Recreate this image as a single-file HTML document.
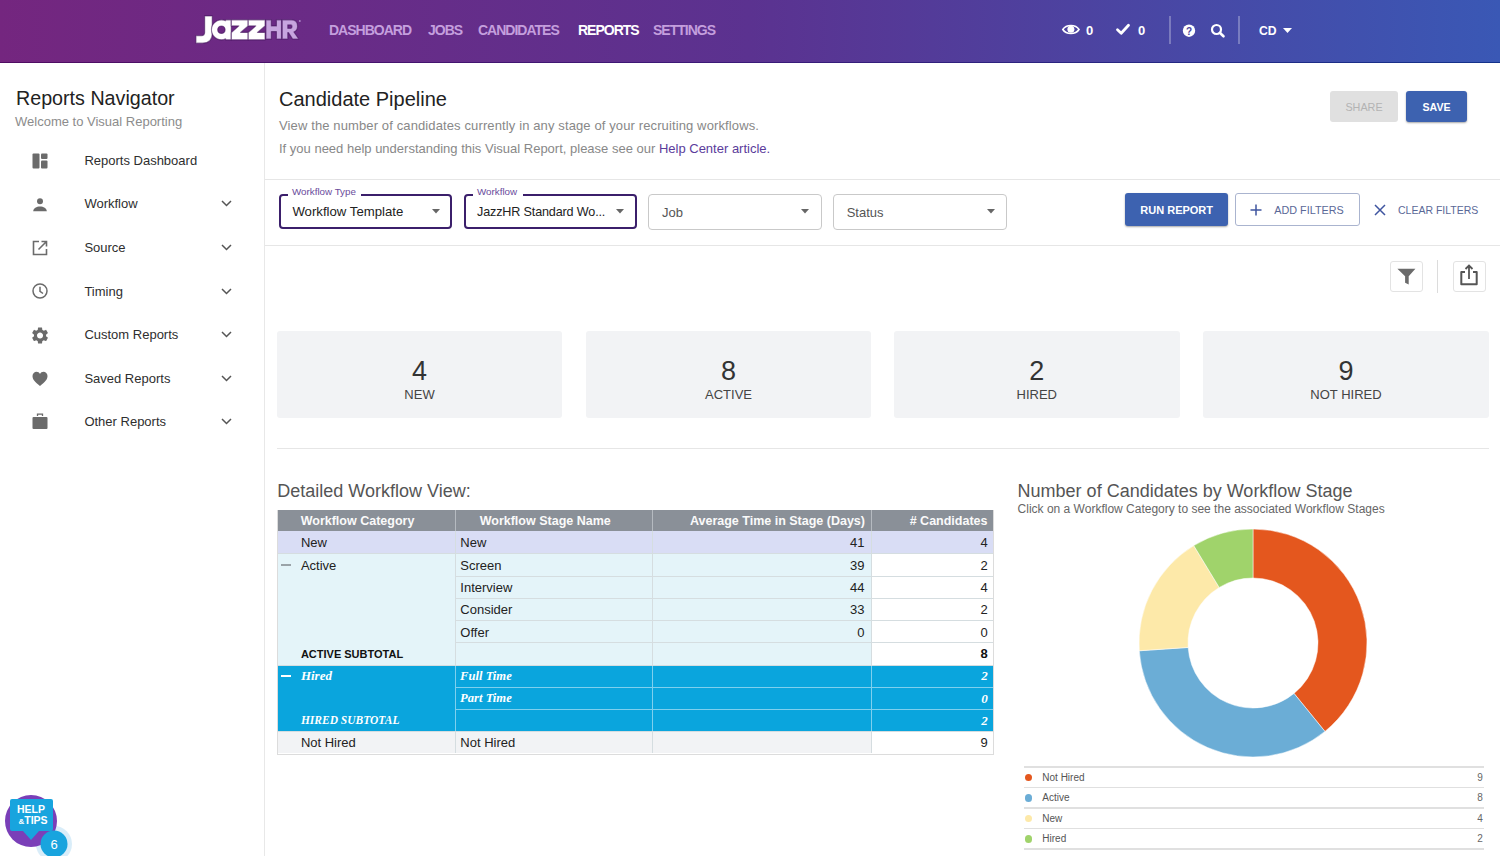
<!DOCTYPE html><html><head><meta charset="utf-8"><style>
*{margin:0;padding:0;box-sizing:border-box}
html,body{width:1500px;height:856px;overflow:hidden;background:#fff;font-family:"Liberation Sans",sans-serif}
.a{position:absolute;white-space:nowrap;line-height:1}
svg{position:absolute;overflow:visible}
</style></head><body>
<div style="position:absolute;left:0px;top:0px;width:1500px;height:62px;background:linear-gradient(90deg,#74267f 0%,#5b3290 50%,#3a58b5 100%)"></div>
<div style="position:absolute;left:0px;top:62px;width:1500px;height:1px;background:linear-gradient(90deg,#500c62 0%,#3a1a78 50%,#13328b 100%)"></div>
<svg style="left:0;top:0" width="320" height="60" viewBox="0 0 320 60"><g stroke="#3c0f55" stroke-width="1.2" stroke-opacity="0.55" stroke-linejoin="round"><path d="M204.6 15.9 H212.3 V33.5 Q212.3 43.2 202.5 43.2 H195.9 V35.6 H201.5 Q204.6 35.6 204.6 32.5 Z" fill="#fff"/><path fill-rule="evenodd" d="M221.6 19.8 A10 10 0 1 0 225.6 38.9 V39.8 H231.3 V19.8 H225.6 V20.6 A10 10 0 0 0 221.6 19.8 Z M221.4 26 A3.7 3.7 0 1 1 221.4 33.4 A3.7 3.7 0 1 1 221.4 26 Z" fill="#fff"/><path d="M231.3 19.8 H248.20000000000002 V25.9 L240.60000000000002 32.4 H248.20000000000002 V39.8 H231.3 V32.6 L238.8 25.9 H231.3 Z" fill="#fff"/><path d="M248.2 19.8 H265.09999999999997 V25.9 L257.49999999999994 32.4 H265.09999999999997 V39.8 H248.2 V32.6 L255.7 25.9 H248.2 Z" fill="#fff"/><path d="M265.9 19.8 H271.4 V25.9 H276.4 V19.8 H281.5 V39 H276.4 V31.6 H271.4 V39 H265.9 Z" fill="#c7a5df"/><path fill-rule="evenodd" d="M282.2 19.8 H291.5 Q297.6 19.8 297.6 26.2 Q297.6 30.4 293.9 32 L298.8 39 H292.6 L288.4 32.6 H287.8 V39 H282.2 Z M287.8 24.9 H290.8 Q292 24.9 292 26.6 Q292 28.3 290.8 28.3 H287.8 Z" fill="#c7a5df"/></g><circle cx="299.8" cy="21" r="1" fill="#c7a5df" opacity=".7"/></svg>
<div class="a" style="left:329px;top:23.15px;font-size:14px;color:#c49fdd;font-weight:bold;letter-spacing:-1px;">DASHBOARD</div>
<div class="a" style="left:428px;top:23.15px;font-size:14px;color:#c49fdd;font-weight:bold;letter-spacing:-1px;">JOBS</div>
<div class="a" style="left:478px;top:23.15px;font-size:14px;color:#c49fdd;font-weight:bold;letter-spacing:-1px;">CANDIDATES</div>
<div class="a" style="left:578px;top:23.15px;font-size:14px;color:#fff;font-weight:bold;letter-spacing:-1px;">REPORTS</div>
<div class="a" style="left:653px;top:23.15px;font-size:14px;color:#c49fdd;font-weight:bold;letter-spacing:-1px;">SETTINGS</div>
<svg style="left:1061px;top:22px" width="20" height="15" viewBox="0 0 20 15">
<path d="M1.8 7.5 C5.2 2.2 14.6 2.2 18 7.5 C14.6 12.8 5.2 12.8 1.8 7.5 Z" fill="none" stroke="#fff" stroke-width="1.6"/>
<circle cx="9.9" cy="7.3" r="3.5" fill="#fff"/></svg>
<div class="a" style="left:1086px;top:24.3px;font-size:13px;color:#fff;font-weight:bold;">0</div>
<svg style="left:1114px;top:22px" width="18" height="16" viewBox="0 0 18 16">
<path d="M3.5 7.8 L7.2 11.2 L14.5 3.3" fill="none" stroke="#fff" stroke-width="2.8" stroke-linecap="round" stroke-linejoin="round"/></svg>
<div class="a" style="left:1138px;top:24.3px;font-size:13px;color:#fff;font-weight:bold;">0</div>
<div style="position:absolute;left:1169px;top:16px;width:1.5px;height:28px;background:rgba(255,255,255,.28)"></div>
<svg style="left:1182px;top:24px" width="15" height="14" viewBox="0 0 15 14">
<circle cx="7" cy="6.7" r="6.2" fill="#fff"/>
<text x="7" y="10.5" text-anchor="middle" font-family="Liberation Sans" font-weight="bold" font-size="10" fill="#4b3f9d">?</text></svg>
<svg style="left:1210px;top:23px" width="16" height="15" viewBox="0 0 16 15">
<circle cx="6.5" cy="6.5" r="4.5" fill="none" stroke="#fff" stroke-width="2.2"/>
<path d="M9.8 9.8 L13.5 13.3" stroke="#fff" stroke-width="2.6" stroke-linecap="round"/></svg>
<div style="position:absolute;left:1238px;top:16px;width:1.5px;height:28px;background:rgba(255,255,255,.28)"></div>
<div class="a" style="left:1259px;top:24.67px;font-size:12.2px;color:#fff;font-weight:bold;">CD</div>
<svg style="left:1283px;top:28px" width="9" height="5" viewBox="0 0 9 5"><path d="M0 0 H9 L4.5 5 Z" fill="#fff"/></svg>
<div style="position:absolute;left:264px;top:63px;width:1px;height:793px;background:#e8e8e8"></div>
<div class="a" style="left:16px;top:89.32px;font-size:19.7px;color:#222;font-weight:normal;">Reports Navigator</div>
<div class="a" style="left:15px;top:114.9px;font-size:13px;color:#8c8c8c;font-weight:normal;">Welcome to Visual Reporting</div>
<div class="a" style="left:84.4px;top:153.8px;font-size:13px;color:#2e2e2e;font-weight:normal;">Reports Dashboard</div>
<svg style="left:32px;top:153px" width="16" height="16" viewBox="0 0 16 16"><rect x="0.5" y="0.5" width="7" height="15" rx="1" fill="#6b6b6b"/><rect x="9" y="0.5" width="6.5" height="5.5" rx="1" fill="#6b6b6b"/><rect x="9" y="7.5" width="6.5" height="8" rx="1" fill="#6b6b6b"/></svg>
<div class="a" style="left:84.4px;top:197.38px;font-size:13px;color:#2e2e2e;font-weight:normal;">Workflow</div>
<svg style="left:32px;top:197.5px" width="16" height="16" viewBox="0 0 16 16"><circle cx="8" cy="3.2" r="3" fill="#6b6b6b"/><path d="M1.2 13.2 C1.2 6.8 14.8 6.8 14.8 13.2 Z" fill="#6b6b6b"/></svg>
<svg style="left:221px;top:200.4px" width="11" height="7" viewBox="0 0 11 7"><path d="M1 1 L5.5 5.5 L10 1" fill="none" stroke="#555" stroke-width="1.5"/></svg>
<div class="a" style="left:84.4px;top:240.96px;font-size:13px;color:#2e2e2e;font-weight:normal;">Source</div>
<svg style="left:32px;top:239.7px" width="16" height="16" viewBox="0 0 16 16"><path d="M7 1.5 H1.5 V14.5 H14.5 V9" fill="none" stroke="#6b6b6b" stroke-width="1.6"/><path d="M9.5 1.5 H14.5 V6.5 M14.5 1.5 L6.5 9.5" fill="none" stroke="#6b6b6b" stroke-width="1.6"/></svg>
<svg style="left:221px;top:244.0px" width="11" height="7" viewBox="0 0 11 7"><path d="M1 1 L5.5 5.5 L10 1" fill="none" stroke="#555" stroke-width="1.5"/></svg>
<div class="a" style="left:84.4px;top:284.54px;font-size:13px;color:#2e2e2e;font-weight:normal;">Timing</div>
<svg style="left:32px;top:283.3px" width="16" height="16" viewBox="0 0 16 16"><circle cx="8" cy="8" r="7" fill="none" stroke="#6b6b6b" stroke-width="1.5"/><path d="M8 3.8 V8.3 L11 10.5" fill="none" stroke="#6b6b6b" stroke-width="1.5"/></svg>
<svg style="left:221px;top:287.5px" width="11" height="7" viewBox="0 0 11 7"><path d="M1 1 L5.5 5.5 L10 1" fill="none" stroke="#555" stroke-width="1.5"/></svg>
<div class="a" style="left:84.4px;top:328.12px;font-size:13px;color:#2e2e2e;font-weight:normal;">Custom Reports</div>
<svg style="left:32px;top:326.7px" width="16" height="16" viewBox="0 0 16 16"><path transform="translate(-2.05 -1.6) scale(0.84)" d="M19.14,12.94c0.04-0.3,0.06-0.61,0.06-0.94c0-0.32-0.02-0.64-0.07-0.94l2.03-1.58c0.18-0.14,0.23-0.41,0.12-0.61l-1.92-3.32c-0.12-0.22-0.37-0.29-0.59-0.22l-2.39,0.96c-0.5-0.38-1.03-0.7-1.62-0.94L14.4,2.81c-0.04-0.24-0.24-0.41-0.48-0.41h-3.84c-0.24,0-0.43,0.17-0.47,0.41L9.25,5.35C8.66,5.59,8.12,5.92,7.63,6.29L5.24,5.33c-0.22-0.08-0.47,0-0.59,0.22L2.74,8.87C2.62,9.08,2.66,9.34,2.86,9.48l2.03,1.58C4.84,11.36,4.8,11.69,4.8,12s0.02,0.64,0.07,0.94l-2.03,1.58c-0.18,0.14-0.23,0.41-0.12,0.61l1.92,3.32c0.12,0.22,0.37,0.29,0.59,0.22l2.39-0.96c0.5,0.38,1.03,0.7,1.62,0.94l0.36,2.54c0.05,0.24,0.24,0.41,0.48,0.41h3.84c0.24,0,0.44-0.17,0.47-0.41l0.36-2.54c0.59-0.24,1.13-0.56,1.62-0.94l2.39,0.96c0.22,0.08,0.47,0,0.59-0.22l1.92-3.32c0.12-0.22,0.07-0.47-0.12-0.61L19.14,12.94z M12,15.6c-1.98,0-3.6-1.62-3.6-3.6s1.62-3.6,3.6-3.6s3.6,1.62,3.6,3.6S13.98,15.6,12,15.6z" fill="#6b6b6b"/></svg>
<svg style="left:221px;top:331.1px" width="11" height="7" viewBox="0 0 11 7"><path d="M1 1 L5.5 5.5 L10 1" fill="none" stroke="#555" stroke-width="1.5"/></svg>
<div class="a" style="left:84.4px;top:371.7px;font-size:13px;color:#2e2e2e;font-weight:normal;">Saved Reports</div>
<svg style="left:32px;top:370.5px" width="16" height="16" viewBox="0 0 16 16"><path d="M8 15 C3 11 0.5 8.5 0.5 5 C0.5 2.5 2.5 0.8 4.5 0.8 C6 0.8 7.3 1.7 8 3 C8.7 1.7 10 0.8 11.5 0.8 C13.5 0.8 15.5 2.5 15.5 5 C15.5 8.5 13 11 8 15 Z" fill="#6b6b6b"/></svg>
<svg style="left:221px;top:374.7px" width="11" height="7" viewBox="0 0 11 7"><path d="M1 1 L5.5 5.5 L10 1" fill="none" stroke="#555" stroke-width="1.5"/></svg>
<div class="a" style="left:84.4px;top:415.28px;font-size:13px;color:#2e2e2e;font-weight:normal;">Other Reports</div>
<svg style="left:32px;top:413.1px" width="16" height="16" viewBox="0 0 16 16"><path d="M5.5 3 V1.2 H10.5 V3" fill="none" stroke="#6b6b6b" stroke-width="1.3"/><rect x="0.5" y="4" width="15" height="12" rx="1" fill="#6b6b6b"/></svg>
<svg style="left:221px;top:418.3px" width="11" height="7" viewBox="0 0 11 7"><path d="M1 1 L5.5 5.5 L10 1" fill="none" stroke="#555" stroke-width="1.5"/></svg>
<svg style="left:0px;top:780px" width="80" height="76" viewBox="0 0 80 76">
<circle cx="54" cy="64" r="18" fill="#cfe9f7" opacity=".8"/>
<circle cx="31" cy="41" r="26" fill="#7a3fb8"/>
<path d="M12 19 H51 Q53 19 53 21 V49 Q53 51 51 51 H39 L31 60 L23 51 H12 Q10 51 10 49 V21 Q10 19 12 19 Z" fill="#18a4de"/>
<text x="31" y="33" text-anchor="middle" font-family="Liberation Sans" font-weight="bold" font-size="10.5" fill="#fff">HELP</text>
<text x="33" y="44" text-anchor="middle" font-family="Liberation Sans" font-weight="bold" font-size="10.5" fill="#fff"><tspan font-size="8">&amp;</tspan>TIPS</text>
<circle cx="54" cy="64" r="13.5" fill="#18a4de"/>
<text x="54" y="69" text-anchor="middle" font-family="Liberation Sans" font-size="13" fill="#fff">6</text>
</svg>
<div class="a" style="left:279px;top:88.77px;font-size:20px;color:#222;font-weight:normal;">Candidate Pipeline</div>
<div class="a" style="left:279px;top:119.1px;font-size:13px;color:#888;font-weight:normal;letter-spacing:.12px;">View the number of candidates currently in any stage of your recruiting workflows.</div>
<div class="a" style="left:279px;top:141.8px;font-size:13px;color:#888;font-weight:normal;">If you need help understanding this Visual Report, please see our <span style="color:#5b3c9b">Help Center article.</span></div>
<div style="position:absolute;left:1330px;top:91px;width:68px;height:31px;background:#e0e0e0;border-radius:3px"></div>
<div class="a" style="left:1164px;width:400px;text-align:center;top:101.76px;font-size:10.8px;color:#b3b3b3;font-weight:normal;">SHARE</div>
<div style="position:absolute;left:1406px;top:91px;width:61px;height:31px;background:#3d62b0;border-radius:3px;box-shadow:0 1px 2px rgba(0,0,0,.35)"></div>
<div class="a" style="left:1236.5px;width:400px;text-align:center;top:101.93px;font-size:10.6px;color:#fff;font-weight:bold;">SAVE</div>
<div style="position:absolute;left:265px;top:179px;width:1235px;height:1px;background:#e6e6e6"></div>
<div style="position:absolute;left:265px;top:245px;width:1235px;height:1px;background:#e6e6e6"></div>
<div style="position:absolute;left:279px;top:193.5px;width:173px;height:35.5px;border:2px solid #3b1f6b;border-radius:4px"></div>
<div style="position:absolute;left:288px;top:190px;width:73px;height:7px;background:#fff"></div>
<div class="a" style="left:292px;top:186.7px;font-size:9.8px;color:#6a4c9c;font-weight:normal;">Workflow Type</div>
<div class="a" style="left:292.4px;top:205.33px;font-size:13.2px;color:#222;font-weight:normal;">Workflow Template</div>
<svg style="left:431.5px;top:209px" width="8" height="5" viewBox="0 0 8 5"><path d="M0 0 H8 L4 4.5 Z" fill="#666"/></svg>
<div style="position:absolute;left:463.5px;top:193.5px;width:173.0px;height:35.5px;border:2px solid #3b1f6b;border-radius:4px"></div>
<div style="position:absolute;left:473px;top:190px;width:50px;height:7px;background:#fff"></div>
<div class="a" style="left:477px;top:186.7px;font-size:9.8px;color:#6a4c9c;font-weight:normal;">Workflow</div>
<div class="a" style="left:477px;top:205.33px;font-size:13.2px;color:#222;font-weight:normal;"><span style="font-size:12.6px;letter-spacing:-.15px">JazzHR Standard Wo...</span></div>
<svg style="left:616px;top:209px" width="8" height="5" viewBox="0 0 8 5"><path d="M0 0 H8 L4 4.5 Z" fill="#666"/></svg>
<div style="position:absolute;left:647.5px;top:193.5px;width:174.0px;height:36.0px;border:1px solid #c9c9c9;border-radius:4px"></div>
<div class="a" style="left:662px;top:205.5px;font-size:13px;color:#555;font-weight:normal;">Job</div>
<svg style="left:800.5px;top:209px" width="8" height="5" viewBox="0 0 8 5"><path d="M0 0 H8 L4 4.5 Z" fill="#666"/></svg>
<div style="position:absolute;left:833px;top:193.5px;width:173.5px;height:36.0px;border:1px solid #c9c9c9;border-radius:4px"></div>
<div class="a" style="left:846.7px;top:205.5px;font-size:13px;color:#555;font-weight:normal;">Status</div>
<svg style="left:986.5px;top:209px" width="8" height="5" viewBox="0 0 8 5"><path d="M0 0 H8 L4 4.5 Z" fill="#666"/></svg>
<div style="position:absolute;left:1125px;top:193px;width:103px;height:33px;background:#3d62b0;border-radius:3px;box-shadow:0 1px 2px rgba(0,0,0,.35)"></div>
<div class="a" style="left:1140.3px;top:204.89px;font-size:11px;color:#fff;font-weight:bold;">RUN REPORT</div>
<div style="position:absolute;left:1235px;top:193px;width:124.5px;height:33px;border:1px solid #aab4cf;border-radius:3px"></div>
<svg style="left:1250px;top:204px" width="12" height="12" viewBox="0 0 12 12"><path d="M6 0.5 V11.5 M0.5 6 H11.5" stroke="#3f55a0" stroke-width="1.5"/></svg>
<div class="a" style="left:1274.3px;top:204.56px;font-size:10.8px;color:#5a6897;font-weight:normal;">ADD FILTERS</div>
<svg style="left:1374px;top:203.5px" width="12" height="12" viewBox="0 0 12 12"><path d="M1 1 L11 11 M11 1 L1 11" stroke="#3f55a0" stroke-width="1.5"/></svg>
<div class="a" style="left:1398px;top:204.81px;font-size:10.5px;color:#5a6897;font-weight:normal;">CLEAR FILTERS</div>
<div style="position:absolute;left:1390px;top:261px;width:33px;height:31px;border:1px solid #e3e3e3;border-radius:3px"></div>
<svg style="left:1397px;top:268px" width="19" height="17" viewBox="0 0 19 17"><path d="M0.4 0.8 H18.4 L11.7 8.2 V16.5 L8.1 14.8 V8.2 Z" fill="#6b6b6b"/></svg>
<div style="position:absolute;left:1437px;top:260px;width:1px;height:33px;background:#dcdcdc"></div>
<div style="position:absolute;left:1453px;top:261px;width:33px;height:31px;border:1px solid #e3e3e3;border-radius:3px"></div>
<svg style="left:1459px;top:264px" width="20" height="22" viewBox="0 0 20 22"><path d="M6 8 H2.3 V20.3 H17.7 V8 H14" fill="none" stroke="#555" stroke-width="2" stroke-linejoin="round"/><path d="M10 15 V2 M6.5 5 L10 1.5 L13.5 5" fill="none" stroke="#555" stroke-width="1.8"/></svg>
<div style="position:absolute;left:277px;top:331px;width:285px;height:87px;background:#f2f3f5;border-radius:3px"></div>
<div class="a" style="left:219.5px;width:400px;text-align:center;top:357.64px;font-size:27px;color:#333;font-weight:normal;">4</div>
<div class="a" style="left:219.5px;width:400px;text-align:center;top:387.8px;font-size:13px;color:#444;font-weight:normal;">NEW</div>
<div style="position:absolute;left:586px;top:331px;width:285px;height:87px;background:#f2f3f5;border-radius:3px"></div>
<div class="a" style="left:528.5px;width:400px;text-align:center;top:357.64px;font-size:27px;color:#333;font-weight:normal;">8</div>
<div class="a" style="left:528.5px;width:400px;text-align:center;top:387.8px;font-size:13px;color:#444;font-weight:normal;">ACTIVE</div>
<div style="position:absolute;left:894px;top:331px;width:285.5px;height:87px;background:#f2f3f5;border-radius:3px"></div>
<div class="a" style="left:836.75px;width:400px;text-align:center;top:357.64px;font-size:27px;color:#333;font-weight:normal;">2</div>
<div class="a" style="left:836.75px;width:400px;text-align:center;top:387.8px;font-size:13px;color:#444;font-weight:normal;">HIRED</div>
<div style="position:absolute;left:1203px;top:331px;width:286px;height:87px;background:#f2f3f5;border-radius:3px"></div>
<div class="a" style="left:1146.0px;width:400px;text-align:center;top:357.64px;font-size:27px;color:#333;font-weight:normal;">9</div>
<div class="a" style="left:1146.0px;width:400px;text-align:center;top:387.8px;font-size:13px;color:#444;font-weight:normal;">NOT HIRED</div>
<div style="position:absolute;left:277px;top:448px;width:1212px;height:1px;background:#e6e6e6"></div>
<div class="a" style="left:277.3px;top:481.86px;font-size:18px;color:#555;font-weight:normal;">Detailed Workflow View:</div>
<div class="a" style="left:1017.6px;top:481.66px;font-size:18px;color:#555;font-weight:normal;">Number of Candidates by Workflow Stage</div>
<div class="a" style="left:1017.6px;top:503.14px;font-size:12px;color:#666;font-weight:normal;">Click on a Workflow Category to see the associated Workflow Stages</div>
<div style="position:absolute;left:277px;top:510px;width:716px;height:21px;background:#8a9098"></div>
<div style="position:absolute;left:454.5px;top:510px;width:1.0px;height:21px;background:#b5bac0"></div>
<div style="position:absolute;left:652.0px;top:510px;width:1.0px;height:21px;background:#b5bac0"></div>
<div style="position:absolute;left:871.0px;top:510px;width:1.0px;height:21px;background:#b5bac0"></div>
<div class="a" style="left:300.7px;top:514.62px;font-size:12.5px;color:#fafafa;font-weight:bold;">Workflow Category</div>
<div class="a" style="left:479.7px;top:514.62px;font-size:12.5px;color:#fafafa;font-weight:bold;">Workflow Stage Name</div>
<div class="a" style="right:635px;top:514.62px;font-size:12.5px;color:#fafafa;font-weight:bold;">Average Time in Stage (Days)</div>
<div class="a" style="right:512.5px;top:514.62px;font-size:12.5px;color:#fafafa;font-weight:bold;"># Candidates</div>
<div style="position:absolute;left:277px;top:531px;width:716px;height:22.5px;background:#d9ddf5"></div>
<div style="position:absolute;left:277px;top:553.5px;width:594.5px;height:22.5px;background:#e4f4f9"></div>
<div style="position:absolute;left:871.5px;top:553.5px;width:121.5px;height:22.5px;background:#fff"></div>
<div style="position:absolute;left:277px;top:576px;width:594.5px;height:22.200000000000045px;background:#e4f4f9"></div>
<div style="position:absolute;left:871.5px;top:576px;width:121.5px;height:22.200000000000045px;background:#fff"></div>
<div style="position:absolute;left:277px;top:598.2px;width:594.5px;height:22.199999999999932px;background:#e4f4f9"></div>
<div style="position:absolute;left:871.5px;top:598.2px;width:121.5px;height:22.199999999999932px;background:#fff"></div>
<div style="position:absolute;left:277px;top:620.4px;width:594.5px;height:21.899999999999977px;background:#e4f4f9"></div>
<div style="position:absolute;left:871.5px;top:620.4px;width:121.5px;height:21.899999999999977px;background:#fff"></div>
<div style="position:absolute;left:277px;top:642.3px;width:594.5px;height:22.90000000000009px;background:#e4f4f9"></div>
<div style="position:absolute;left:871.5px;top:642.3px;width:121.5px;height:22.90000000000009px;background:#fff"></div>
<div style="position:absolute;left:277px;top:665.2px;width:716px;height:21.799999999999955px;background:#0aa5dd"></div>
<div style="position:absolute;left:277px;top:687px;width:716px;height:22px;background:#0aa5dd"></div>
<div style="position:absolute;left:277px;top:709px;width:716px;height:22.200000000000045px;background:#0aa5dd"></div>
<div style="position:absolute;left:277px;top:731.2px;width:594.5px;height:22.299999999999955px;background:#f2f3f5"></div>
<div style="position:absolute;left:871.5px;top:731.2px;width:121.5px;height:22.299999999999955px;background:#fff"></div>
<div style="position:absolute;left:454.5px;top:531px;width:1.0px;height:134.20000000000005px;background:#d5dde0"></div>
<div style="position:absolute;left:454.5px;top:665.2px;width:1.0px;height:66.0px;background:#7fd0ee"></div>
<div style="position:absolute;left:454.5px;top:731.2px;width:1.0px;height:22.299999999999955px;background:#d5dde0"></div>
<div style="position:absolute;left:652.0px;top:531px;width:1.0px;height:134.20000000000005px;background:#d5dde0"></div>
<div style="position:absolute;left:652.0px;top:665.2px;width:1.0px;height:66.0px;background:#7fd0ee"></div>
<div style="position:absolute;left:652.0px;top:731.2px;width:1.0px;height:22.299999999999955px;background:#d5dde0"></div>
<div style="position:absolute;left:871.0px;top:531px;width:1.0px;height:134.20000000000005px;background:#d5dde0"></div>
<div style="position:absolute;left:871.0px;top:665.2px;width:1.0px;height:66.0px;background:#7fd0ee"></div>
<div style="position:absolute;left:871.0px;top:731.2px;width:1.0px;height:22.299999999999955px;background:#d5dde0"></div>
<div style="position:absolute;left:277px;top:553.0px;width:716px;height:1.0px;background:#d5dde0"></div>
<div style="position:absolute;left:455px;top:575.5px;width:538px;height:1.0px;background:#d5dde0"></div>
<div style="position:absolute;left:455px;top:597.7px;width:538px;height:1.0px;background:#d5dde0"></div>
<div style="position:absolute;left:455px;top:619.9px;width:538px;height:1.0px;background:#d5dde0"></div>
<div style="position:absolute;left:455px;top:641.8px;width:538px;height:1.0px;background:#d5dde0"></div>
<div style="position:absolute;left:277px;top:664.7px;width:716px;height:1.0px;background:#d5dde0"></div>
<div style="position:absolute;left:455px;top:686.5px;width:538px;height:1.0px;background:#7fd0ee"></div>
<div style="position:absolute;left:455px;top:708.5px;width:538px;height:1.0px;background:#7fd0ee"></div>
<div style="position:absolute;left:277px;top:730.7px;width:716px;height:1.0px;background:#d5dde0"></div>
<div style="position:absolute;left:276.5px;top:510px;width:1.0px;height:244px;background:#dcdcdc"></div>
<div style="position:absolute;left:992.5px;top:510px;width:1.0px;height:244px;background:#dcdcdc"></div>
<div style="position:absolute;left:276.5px;top:753.5px;width:717.0px;height:1.0px;background:#dcdcdc"></div>
<div class="a" style="left:300.9px;top:536.1px;font-size:13px;color:#222;font-weight:normal;">New</div>
<div class="a" style="left:460.3px;top:536.1px;font-size:13px;color:#222;font-weight:normal;">New</div>
<div class="a" style="right:635.5px;top:536.1px;font-size:13px;color:#222;font-weight:normal;">41</div>
<div class="a" style="right:512.2px;top:536.1px;font-size:13px;color:#222;font-weight:normal;">4</div>
<div class="a" style="left:300.9px;top:558.6px;font-size:13px;color:#222;font-weight:normal;">Active</div>
<div class="a" style="left:460.3px;top:558.6px;font-size:13px;color:#222;font-weight:normal;">Screen</div>
<div class="a" style="right:635.5px;top:558.6px;font-size:13px;color:#222;font-weight:normal;">39</div>
<div class="a" style="right:512.2px;top:558.6px;font-size:13px;color:#222;font-weight:normal;">2</div>
<div class="a" style="left:460.3px;top:581.1px;font-size:13px;color:#222;font-weight:normal;">Interview</div>
<div class="a" style="right:635.5px;top:581.1px;font-size:13px;color:#222;font-weight:normal;">44</div>
<div class="a" style="right:512.2px;top:581.1px;font-size:13px;color:#222;font-weight:normal;">4</div>
<div class="a" style="left:460.3px;top:603.3px;font-size:13px;color:#222;font-weight:normal;">Consider</div>
<div class="a" style="right:635.5px;top:603.3px;font-size:13px;color:#222;font-weight:normal;">33</div>
<div class="a" style="right:512.2px;top:603.3px;font-size:13px;color:#222;font-weight:normal;">2</div>
<div class="a" style="left:460.3px;top:625.5px;font-size:13px;color:#222;font-weight:normal;">Offer</div>
<div class="a" style="right:635.5px;top:625.5px;font-size:13px;color:#222;font-weight:normal;">0</div>
<div class="a" style="right:512.2px;top:625.5px;font-size:13px;color:#222;font-weight:normal;">0</div>
<div class="a" style="left:300.9px;top:648.59px;font-size:11px;color:#111;font-weight:bold;">ACTIVE SUBTOTAL</div>
<div class="a" style="right:512.2px;top:647.4px;font-size:13px;color:#111;font-weight:bold;">8</div>
<div class="a" style="left:300.9px;top:669.4px;font-size:13px;color:#fff;font-weight:bold;font-family:'Liberation Serif',serif;font-style:italic;">Hired</div>
<div class="a" style="left:460.1px;top:669.63px;font-size:12.6px;color:#fff;font-weight:bold;font-family:'Liberation Serif',serif;font-style:italic;">Full Time</div>
<div class="a" style="right:512.2px;top:669.4px;font-size:13px;color:#fff;font-weight:bold;font-family:'Liberation Serif',serif;font-style:italic;">2</div>
<div class="a" style="left:460.1px;top:691.83px;font-size:12.6px;color:#fff;font-weight:bold;font-family:'Liberation Serif',serif;font-style:italic;">Part Time</div>
<div class="a" style="right:512.2px;top:691.6px;font-size:13px;color:#fff;font-weight:bold;font-family:'Liberation Serif',serif;font-style:italic;">0</div>
<div class="a" style="left:300.9px;top:715.07px;font-size:11.5px;color:#fff;font-weight:bold;font-family:'Liberation Serif',serif;font-style:italic;">HIRED SUBTOTAL</div>
<div class="a" style="right:512.2px;top:713.8px;font-size:13px;color:#fff;font-weight:bold;font-family:'Liberation Serif',serif;font-style:italic;">2</div>
<div class="a" style="left:300.9px;top:736.3px;font-size:13px;color:#222;font-weight:normal;">Not Hired</div>
<div class="a" style="left:460.3px;top:736.3px;font-size:13px;color:#222;font-weight:normal;">Not Hired</div>
<div class="a" style="right:512.2px;top:736.3px;font-size:13px;color:#222;font-weight:normal;">9</div>
<div style="position:absolute;left:281.3px;top:564px;width:9.699999999999989px;height:1.5px;background:#9aa3a8"></div>
<div style="position:absolute;left:281.3px;top:675px;width:9.699999999999989px;height:2px;background:#fff"></div>
<svg style="left:0;top:0" width="1500" height="856" viewBox="0 0 1500 856"><path d="M1253.00 529.00 A114 114 0 0 1 1324.94 731.43 L1294.02 693.42 A65 65 0 0 0 1253.00 578.00 Z" fill="#e4571e" stroke="#fff" stroke-width="0.5"/><path d="M1324.94 731.43 A114 114 0 0 1 1139.27 650.78 L1188.15 647.44 A65 65 0 0 0 1294.02 693.42 Z" fill="#6badd6" stroke="#fff" stroke-width="0.5"/><path d="M1139.27 650.78 A114 114 0 0 1 1193.77 545.60 L1219.23 587.46 A65 65 0 0 0 1188.15 647.44 Z" fill="#fde9a9" stroke="#fff" stroke-width="0.5"/><path d="M1193.77 545.60 A114 114 0 0 1 1253.00 529.00 L1253.00 578.00 A65 65 0 0 0 1219.23 587.46 Z" fill="#a0d36b" stroke="#fff" stroke-width="0.5"/></svg>
<div style="position:absolute;left:1024px;top:766.25px;width:459.5px;height:1.5px;background:#e0e0e0"></div>
<div style="position:absolute;left:1024px;top:786.75px;width:459.5px;height:1.5px;background:#e0e0e0"></div>
<div style="position:absolute;left:1024px;top:807.25px;width:459.5px;height:1.5px;background:#e0e0e0"></div>
<div style="position:absolute;left:1024px;top:827.75px;width:459.5px;height:1.5px;background:#e0e0e0"></div>
<div style="position:absolute;left:1024px;top:848.25px;width:459.5px;height:1.5px;background:#e0e0e0"></div>
<div style="position:absolute;left:1024.5px;top:773.9000000000001px;width:7.6px;height:7.6px;border-radius:50%;background:#e4571e"></div>
<div class="a" style="left:1042.3px;top:772.84px;font-size:10px;color:#555;font-weight:normal;">Not Hired</div>
<div class="a" style="right:17.299999999999955px;top:772.84px;font-size:10px;color:#666;font-weight:normal;">9</div>
<div style="position:absolute;left:1024.5px;top:794.3000000000001px;width:7.6px;height:7.6px;border-radius:50%;background:#6badd6"></div>
<div class="a" style="left:1042.3px;top:793.24px;font-size:10px;color:#555;font-weight:normal;">Active</div>
<div class="a" style="right:17.299999999999955px;top:793.24px;font-size:10px;color:#666;font-weight:normal;">8</div>
<div style="position:absolute;left:1024.5px;top:814.7px;width:7.6px;height:7.6px;border-radius:50%;background:#fde9a9"></div>
<div class="a" style="left:1042.3px;top:813.63px;font-size:10px;color:#555;font-weight:normal;">New</div>
<div class="a" style="right:17.299999999999955px;top:813.63px;font-size:10px;color:#666;font-weight:normal;">4</div>
<div style="position:absolute;left:1024.5px;top:835.1000000000001px;width:7.6px;height:7.6px;border-radius:50%;background:#a0d36b"></div>
<div class="a" style="left:1042.3px;top:834.04px;font-size:10px;color:#555;font-weight:normal;">Hired</div>
<div class="a" style="right:17.299999999999955px;top:834.04px;font-size:10px;color:#666;font-weight:normal;">2</div>

</body></html>
